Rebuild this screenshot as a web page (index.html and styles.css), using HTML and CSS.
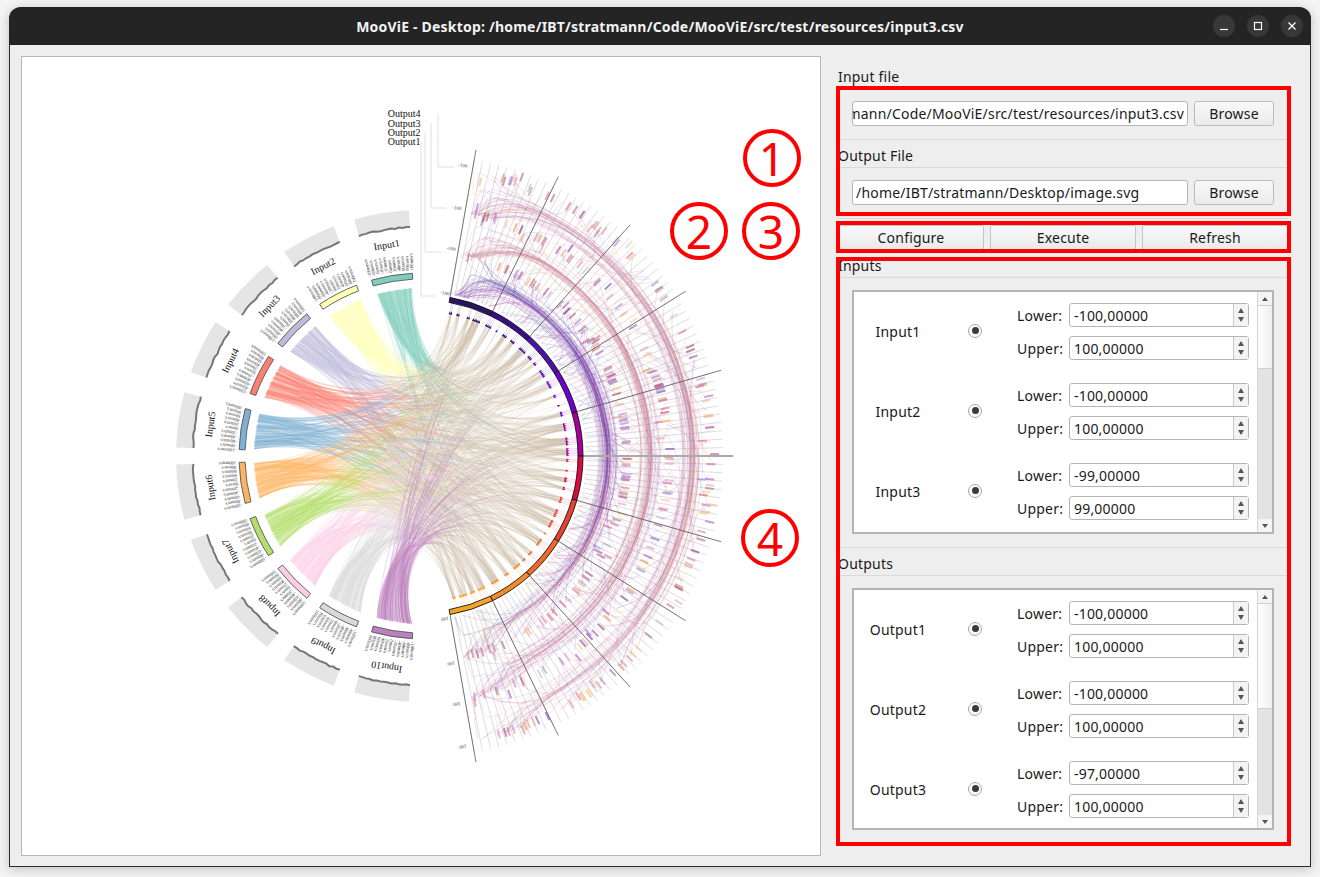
FILE: index.html
```html
<!DOCTYPE html>
<html lang="en">
<head>
    <meta charset="utf-8">
    <title>MooViE - Desktop</title>
    <link rel="stylesheet" href="styles.css">
    <script src="chart.js" defer></script>
</head>
<body>
    <div class="window">
        <div class="titlebar">
            <div></div>
            <div class="title">MooViE - Desktop: /home/IBT/stratmann/Code/MooViE/src/test/resources/input3.csv</div>
            <div class="controls">
                <span class="control"><svg width="12" height="12" viewBox="0 0 12 12"><path d="M2 9.5H10" stroke="#fff" stroke-width="1.2"/></svg></span>
                <span class="control"><svg width="12" height="12" viewBox="0 0 12 12"><rect x="2.5" y="2.5" width="7" height="7" fill="none" stroke="#fff" stroke-width="1.2"/></svg></span>
                <span class="control"><svg width="12" height="12" viewBox="0 0 12 12"><path d="M2.5 2.5L9.5 9.5M9.5 2.5L2.5 9.5" stroke="#fff" stroke-width="1.3"/></svg></span>
            </div>
        </div>
        <div class="main">
            <div class="chart">
                <svg id="plot" width="798" height="798" viewBox="22 57 798 798"></svg>
            </div>
            <div class="pane">
                <div class="group-title first">Input file</div>
                <div class="file-row">
                    <div class="file-field scrolled"><span>/home/IBT/stratmann/Code/MooViE/src/test/resources/input3.csv</span></div>
                    <div class="browse">Browse</div>
                </div>
                <div class="divider"></div>
                <div class="group-title">Output File</div>
                <div class="file-row">
                    <div class="file-field"><span>/home/IBT/stratmann/Desktop/image.svg</span></div>
                    <div class="browse">Browse</div>
                </div>
                <div class="divider"></div>
                <div class="actions">
                    <div class="action">Configure</div>
                    <div class="action">Execute</div>
                    <div class="action">Refresh</div>
                </div>
                <div class="group-title">Inputs</div>
                <div class="scroll inputs-scroll">
                    <div class="rows">
                        <div class="var">
                            <div class="var-name">Input1</div>
                            <div class="radio-cell"><span class="radio"></span></div>
                            <div class="limits">
                                <label>Lower:</label><div class="spin"><span class="spin-text">-100,00000</span><span class="spin-btn"><i class="up"></i><i class="down"></i></span></div>
                                <label>Upper:</label><div class="spin"><span class="spin-text">100,00000</span><span class="spin-btn"><i class="up"></i><i class="down"></i></span></div>
                            </div>
                        </div>
                        <div class="var">
                            <div class="var-name">Input2</div>
                            <div class="radio-cell"><span class="radio"></span></div>
                            <div class="limits">
                                <label>Lower:</label><div class="spin"><span class="spin-text">-100,00000</span><span class="spin-btn"><i class="up"></i><i class="down"></i></span></div>
                                <label>Upper:</label><div class="spin"><span class="spin-text">100,00000</span><span class="spin-btn"><i class="up"></i><i class="down"></i></span></div>
                            </div>
                        </div>
                        <div class="var">
                            <div class="var-name">Input3</div>
                            <div class="radio-cell"><span class="radio"></span></div>
                            <div class="limits">
                                <label>Lower:</label><div class="spin"><span class="spin-text">-99,00000</span><span class="spin-btn"><i class="up"></i><i class="down"></i></span></div>
                                <label>Upper:</label><div class="spin"><span class="spin-text">99,00000</span><span class="spin-btn"><i class="up"></i><i class="down"></i></span></div>
                            </div>
                        </div>
                    </div>
                    <div class="scrollbar">
                        <div class="sb-btn"><i class="up"></i></div>
                        <div class="sb-thumb thumb-inputs"></div>
                        <div class="sb-track"></div>
                        <div class="sb-btn"><i class="down"></i></div>
                    </div>
                </div>
                <div class="divider"></div>
                <div class="group-title">Outputs</div>
                <div class="scroll outputs-scroll">
                    <div class="rows">
                        <div class="var">
                            <div class="var-name">Output1</div>
                            <div class="radio-cell"><span class="radio"></span></div>
                            <div class="limits">
                                <label>Lower:</label><div class="spin"><span class="spin-text">-100,00000</span><span class="spin-btn"><i class="up"></i><i class="down"></i></span></div>
                                <label>Upper:</label><div class="spin"><span class="spin-text">100,00000</span><span class="spin-btn"><i class="up"></i><i class="down"></i></span></div>
                            </div>
                        </div>
                        <div class="var">
                            <div class="var-name">Output2</div>
                            <div class="radio-cell"><span class="radio"></span></div>
                            <div class="limits">
                                <label>Lower:</label><div class="spin"><span class="spin-text">-100,00000</span><span class="spin-btn"><i class="up"></i><i class="down"></i></span></div>
                                <label>Upper:</label><div class="spin"><span class="spin-text">100,00000</span><span class="spin-btn"><i class="up"></i><i class="down"></i></span></div>
                            </div>
                        </div>
                        <div class="var">
                            <div class="var-name">Output3</div>
                            <div class="radio-cell"><span class="radio"></span></div>
                            <div class="limits">
                                <label>Lower:</label><div class="spin"><span class="spin-text">-97,00000</span><span class="spin-btn"><i class="up"></i><i class="down"></i></span></div>
                                <label>Upper:</label><div class="spin"><span class="spin-text">100,00000</span><span class="spin-btn"><i class="up"></i><i class="down"></i></span></div>
                            </div>
                        </div>
                    </div>
                    <div class="scrollbar">
                        <div class="sb-btn"><i class="up"></i></div>
                        <div class="sb-thumb thumb-outputs"></div>
                        <div class="sb-track"></div>
                        <div class="sb-btn"><i class="down"></i></div>
                    </div>
                </div>
            </div>
        </div>
    </div>

    <!-- red annotations drawn over the screenshot -->
    <div class="mark mark-files"></div>
    <div class="mark mark-actions"></div>
    <div class="mark mark-ranges"></div>
    <div class="badge badge-1">1</div>
    <div class="badge badge-2">2</div>
    <div class="badge badge-3">3</div>
    <div class="badge badge-4">4</div>
</body>
</html>
```

FILE: styles.css
```css
body {
    margin: 0;
    padding: 7px 9px 0 9px;
    height: 870px;
    overflow: hidden;
    position: relative;
    background-color: #f4f4f4;
    font-family: "Noto Sans", sans-serif;
    font-size: 14px;
    color: #1a1a1a;
}

/* Window frame */
.window {
    width: 1302px;
    height: 860px;
    box-sizing: border-box;
    border: 1px solid #2b2b2b;
    border-top: none;
    border-radius: 12px 12px 0 0;
    background-color: #eeeeee;
    box-shadow: 0 2px 12px rgba(0, 0, 0, 0.22);
}

.titlebar {
    height: 38px;
    margin: 0 -1px;
    display: grid;
    grid-template-columns: 1fr auto 1fr;
    align-items: center;
    background-color: #242424;
    border-radius: 12px 12px 0 0;
}

.title {
    color: #f2f2f2;
    font-weight: 700;
    font-size: 14px;
    letter-spacing: 0.2px;
}

.controls {
    display: flex;
    justify-content: flex-end;
    gap: 12px;
    padding-right: 8px;
    margin-top: -1px;
}

.control {
    width: 22px;
    height: 22px;
    border-radius: 50%;
    background-color: #383838;
    display: flex;
    align-items: center;
    justify-content: center;
}

.main {
    display: flex;
    padding: 11px 0 0 11px;
}

/* Plot on the left */
.chart {
    width: 800px;
    height: 800px;
    box-sizing: border-box;
    border: 1px solid #b8b8b8;
    background-color: #fff;
}

.chart svg {
    display: block;
}

.chart text {
    font-family: "Liberation Serif", serif;
}

/* Controls on the right */
.pane {
    width: 450px;
    margin-left: 17px;
    padding-top: 11px;
    letter-spacing: 0.2px;
}

.group-title {
    padding: 5px 0 1px;
    line-height: 21px;
    border-bottom: 1px solid #d9d9d9;
}

.group-title.first {
    padding-top: 0;
    margin-top: -1px;
}

.file-row {
    display: flex;
    gap: 6px;
    margin: 12px 0 13px 14px;
}

.file-field {
    width: 336px;
    height: 25px;
    box-sizing: border-box;
    padding: 0 3px;
    display: flex;
    align-items: center;
    overflow: hidden;
    white-space: nowrap;
    border: 1px solid #b5b5b5;
    border-radius: 3px;
    background-color: #fff;
}

.file-field.scrolled {
    justify-content: flex-end;
    padding-left: 0;
}

.browse {
    width: 80px;
    height: 25px;
    box-sizing: border-box;
    line-height: 23px;
    text-align: center;
    border: 1px solid #bcbcbc;
    border-radius: 3px;
    background: linear-gradient(#f8f8f8, #ebebeb);
}

.divider {
    height: 1px;
    background-color: #d9d9d9;
}

.actions {
    display: grid;
    grid-template-columns: repeat(3, 1fr);
    gap: 6px;
    margin-top: 6px;
}

.action {
    height: 25px;
    box-sizing: border-box;
    line-height: 23px;
    text-align: center;
    border: 1px solid #c4c4c4;
    border-radius: 2px;
    background: linear-gradient(#fafafa, #e9e9e9);
}

.scroll {
    display: flex;
    width: 422px;
    box-sizing: border-box;
    margin: 12px 0 13px 14px;
    border: 2px solid #b4b4b4;
    background-color: #fff;
}

.inputs-scroll {
    height: 244px;
}

.outputs-scroll {
    height: 242px;
    margin-bottom: 0;
}

.rows {
    flex: 1;
    overflow: hidden;
    padding-top: 11px;
}

.var {
    display: grid;
    grid-template-columns: 88px 66px 1fr;
    align-items: center;
    height: 57px;
    margin-bottom: 23px;
}

.var-name {
    text-align: center;
}

.radio-cell {
    display: flex;
    justify-content: center;
    margin-bottom: 2px;
}

.radio {
    width: 14px;
    height: 14px;
    box-sizing: border-box;
    border: 1px solid #a8a8a8;
    border-radius: 50%;
    background-color: #fafafa;
    display: flex;
    align-items: center;
    justify-content: center;
}

.radio::after {
    content: "";
    width: 7px;
    height: 7px;
    border-radius: 50%;
    background-color: #3b3b3b;
}

.limits {
    display: grid;
    grid-template-columns: 52px 180px;
    row-gap: 9px;
    align-items: center;
    padding-left: 9px;
}

.spin {
    height: 24px;
    box-sizing: border-box;
    display: flex;
    border: 1px solid #b5b5b5;
    border-radius: 3px;
    background-color: #fff;
}

.spin-text {
    flex: 1;
    padding-left: 4px;
    line-height: 23px;
}

.spin-btn {
    width: 14px;
    border-left: 1px solid #c8c8c8;
    background-color: #f3f3f3;
    display: flex;
    flex-direction: column;
    align-items: center;
    justify-content: center;
    gap: 4px;
}

.up,
.down {
    display: block;
    width: 0;
    height: 0;
    border-left: 3.5px solid transparent;
    border-right: 3.5px solid transparent;
}

.up {
    border-bottom: 5px solid #555;
}

.down {
    border-top: 5px solid #555;
}

.scrollbar {
    width: 14px;
    display: flex;
    flex-direction: column;
    border-left: 1px solid #d6d6d6;
    background-color: #e3e3e3;
}

.sb-btn {
    height: 13px;
    background-color: #f4f4f4;
    display: flex;
    align-items: center;
    justify-content: center;
}

.sb-btn .up {
    border-bottom-width: 4px;
}

.sb-btn .down {
    border-top-width: 4px;
}

.sb-thumb {
    border-top: 1px solid #d0d0d0;
    border-bottom: 1px solid #d0d0d0;
    background: linear-gradient(90deg, #ffffff, #efefef);
}

.thumb-inputs {
    height: 62px;
}

.thumb-outputs {
    height: 104px;
}

.sb-track {
    flex: 1;
}

/* Red annotations */
.mark {
    position: absolute;
    left: 836px;
    width: 455px;
    box-sizing: border-box;
    border: 4px solid #ff0000;
}

.mark-files {
    top: 86px;
    height: 130px;
}

.mark-actions {
    top: 221px;
    height: 32px;
}

.mark-ranges {
    top: 257px;
    height: 589px;
}

.badge {
    position: absolute;
    width: 58px;
    height: 58px;
    box-sizing: border-box;
    border: 4px solid #ff0000;
    border-radius: 50%;
    color: #ff0000;
    font-size: 46px;
    line-height: 50px;
    text-align: center;
}

.badge-1 {
    left: 743px;
    top: 129px;
}

.badge-2 {
    left: 670px;
    top: 202px;
}

.badge-3 {
    left: 742px;
    top: 202px;
}

.badge-4 {
    left: 741px;
    top: 509px;
}
```

FILE: chart.js
```js
const NS = "http://www.w3.org/2000/svg";
const plot = document.getElementById("plot");
const CX = 422, CY = 456;

let seed = 4711;
function rnd() {
    seed = (seed * 16807) % 2147483647;
    return seed / 2147483647;
}
function between(a, b) {
    return a + (b - a) * rnd();
}

// angle in degrees, clockwise from twelve o'clock
function pt(r, deg) {
    const a = deg * Math.PI / 180;
    return [CX + r * Math.sin(a), CY - r * Math.cos(a)];
}
function f(p) {
    return p[0].toFixed(1) + " " + p[1].toFixed(1);
}
function add(tag, attrs, text) {
    const el = document.createElementNS(NS, tag);
    for (const k in attrs) {
        if (k !== "parent") el.setAttribute(k, attrs[k]);
    }
    if (text !== undefined) el.textContent = text;
    (attrs.parent || plot).appendChild(el);
    return el;
}
function sector(r0, r1, a0, a1) {
    const sweep = a1 > a0 ? 1 : 0;
    const rev = a1 > a0 ? 0 : 1;
    return "M" + f(pt(r0, a0)) + "A" + r0 + " " + r0 + " 0 0 " + sweep + " " + f(pt(r0, a1)) +
        "L" + f(pt(r1, a1)) + "A" + r1 + " " + r1 + " 0 0 " + rev + " " + f(pt(r1, a0)) + "Z";
}

const inputColors = ["#80cdbb", "#ffffb3", "#bebada", "#fb8072", "#80b1d3",
    "#fdb462", "#b3de69", "#fccde5", "#d9d9d9", "#bc80bd"];
const ringColors = ["#2b1464", "#371088", "#4a10a8", "#6c02cc", "#a4009a",
    "#d80a40", "#e8432e", "#f0682c", "#f58a28", "#f5a425"];
const dashColors = ["#8a5cd0", "#b05fa8", "#d0607a", "#eaa070", "#f0c080",
    "#9a90d0", "#c070c0", "#a06080", "#e88080"];
const defs = add("defs", {});

function ringColor(deg) {
    return ringColors[Math.min(9, Math.max(0, Math.floor((deg - 10) / 16)))];
}

// spokes of the output half
for (let d = 10; d <= 170.01; d += 1.6) {
    add("path", { d: "M" + f(pt(164, d)) + "L" + f(pt(301, d)), stroke: "#dedede", "stroke-width": 1, fill: "none" });
}

// arcs running between the output tracks
const bands = [[186, 164, 205], [228, 205, 247], [270, 247, 289]];
bands.forEach(function (b, k) {
    for (let i = 0; i < 110; i++) {
        let t0 = between(10, 170), t1 = between(10, 170);
        if (rnd() < 0.2) t0 = between(11, 16);
        if (rnd() < 0.2) t1 = between(160, 169);
        const spread = rnd() < 0.55 ? between(-3, 3) : between(-11, 11), pts = [];
        for (let s = 0; s <= 26; s++) {
            const t = s / 26;
            const ease0 = Math.max(0, 1 - t / 0.14), ease1 = Math.max(0, (t - 0.86) / 0.14);
            const r = b[0] + spread + (b[1] - b[0] - spread) * ease0 * ease0 + (b[2] - b[0] - spread) * ease1 * ease1;
            pts.push(f(pt(r, t0 + (t1 - t0) * t)));
        }
        let col = dashColors[Math.floor(rnd() * dashColors.length)];
        if (k === 0) col = rnd() < 0.6 ? "#6a5aa8" : ringColor((t0 + t1) / 2);
        add("path", { d: "M" + pts.join("L"), stroke: col, "stroke-opacity": 0.19, "stroke-width": 1, fill: "none" });
    }
});

// dashes of the three outer tracks
[205, 247, 289].forEach(function (r) {
    for (let i = 0; i < 105; i++) {
        const d = between(12, 168), rr = r + (rnd() < 0.75 ? between(-1, 1) : between(-9, 9));
        add("path", {
            d: "M" + f(pt(rr - 4.5, d)) + "L" + f(pt(rr + 4.5, d)),
            stroke: dashColors[Math.floor(rnd() * dashColors.length)],
            "stroke-opacity": between(0.35, 0.75), "stroke-width": 2, fill: "none"
        });
    }
});

// major axes
for (let d = 10; d <= 170; d += 16) {
    add("path", {
        d: "M" + f(pt(161, d)) + "L" + f(pt(311, d)),
        stroke: d === 90 ? "#aaaaaa" : "#555555", "stroke-width": d === 90 ? 2 : 0.9,
        "stroke-opacity": d === 90 ? 1 : 0.85, fill: "none"
    });
}

// outer grey histograms, tick labels, bars and labels of the inputs
inputColors.forEach(function (col, i) {
    const a0 = -3 - 18 * i + (i >= 5 ? 1 : 0), a1 = a0 - 13, mid = (a0 + a1) / 2;
    add("path", { d: sector(229, 246, a0, a1), fill: "#e5e5e5" });
    const edge = [];
    for (let s = 0; s <= 14; s++) {
        edge.push(f(pt(229 + between(-0.5, 0.8), a0 + (a1 - a0) * s / 14)));
    }
    add("path", { d: "M" + edge.join("L"), stroke: "#767676", "stroke-width": 2, fill: "none" });
    add("path", { d: sector(177, 183, a0, a1), fill: col, stroke: "#555", "stroke-width": 0.9 });
    for (let s = 0; s <= 10; s++) {
        const d = a0 + (a1 - a0) * s / 10, p = pt(186, d);
        add("text", {
            x: p[0], y: p[1], "font-size": 4.6, fill: "#333",
            transform: "rotate(" + (d - 90) + " " + p[0] + " " + p[1] + ")",
            "dominant-baseline": "middle"
        }, (100 - 20 * s) + "mm/s");
    }
    const lp = pt(213, mid);
    add("text", {
        x: lp[0], y: lp[1], "font-size": 10, fill: "#111", "text-anchor": "middle",
        "dominant-baseline": "middle",
        transform: "rotate(" + mid + " " + lp[0] + " " + lp[1] + ")"
    }, "Input" + (i + 1));
});

// clustered targets on the inside of the ring
const targets = [];
let tAngle = 11;
while (tAngle < 169) {
    const n = 1 + Math.floor(rnd() * 5);
    for (let i = 0; i < n && tAngle < 169; i++) {
        targets.push(tAngle);
        tAngle += 0.62;
    }
    tAngle += between(1, 3.2);
}

// strands from every input to the targets, fading into pale beige at the ring
let gid = 0;
inputColors.forEach(function (col, i) {
    const a0 = -3.4 - 18 * i + (i >= 5 ? 1 : 0), a1 = a0 - 12.2, mid = (a0 + a1) / 2;
    const bundleOf = function (a) {
        return mid * 0.9 + (a - mid) * 0.4;
    };

    // pale body of the ribbon under its strands, fading toward the middle
    const fade = add("radialGradient", {
        parent: defs, id: "fade" + i, gradientUnits: "userSpaceOnUse", cx: CX, cy: CY, r: 170
    });
    add("stop", { parent: fade, offset: "0.38", "stop-color": col, "stop-opacity": 0 });
    add("stop", { parent: fade, offset: "0.75", "stop-color": col, "stop-opacity": 0.42 });
    const end = pt(40, 90);
    add("path", {
        d: "M" + f(pt(168, a0)) + "C" + f(pt(84, bundleOf(a0))) + " " + f(pt(66, 90)) + " " + f(end) +
            "C" + f(pt(66, 90)) + " " + f(pt(84, bundleOf(a1))) + " " + f(pt(168, a1)) + "Z",
        fill: "url(#fade" + i + ")"
    });

    for (let s = 0; s < 90; s++) {
        const a = between(a1, a0);
        const target = targets[Math.floor(rnd() * targets.length)];
        const p0 = pt(168, a), p3 = pt(146, target);
        const p1 = pt(84, bundleOf(a));
        const p2 = pt(66, target + between(-11, 11));
        const id = "g" + gid++;
        const g = add("linearGradient", {
            parent: defs, id: id, gradientUnits: "userSpaceOnUse",
            x1: p0[0], y1: p0[1], x2: p3[0], y2: p3[1]
        });
        add("stop", { parent: g, offset: "0", "stop-color": col });
        add("stop", { parent: g, offset: "0.5", "stop-color": col, "stop-opacity": 0.75 });
        add("stop", { parent: g, offset: "0.8", "stop-color": "#c6b49c", "stop-opacity": 0.5 });
        add("stop", { parent: g, offset: "1", "stop-color": "#c6b49c", "stop-opacity": 0.7 });
        add("path", {
            d: "M" + f(p0) + "C" + f(p1) + " " + f(p2) + " " + f(p3),
            stroke: "url(#" + id + ")", "stroke-opacity": 0.32, "stroke-width": 1, fill: "none"
        });
    }
});

// target markers
targets.forEach(function (d) {
    const c = ringColor(d);
    add("path", { d: "M" + f(pt(147, d)) + "L" + f(pt(155.5, d)), stroke: c, "stroke-opacity": 0.25, "stroke-width": 0.6, fill: "none" });
    add("path", { d: "M" + f(pt(147.5, d)) + "L" + f(pt(144.5, d - 0.45)) + "L" + f(pt(144.5, d + 0.45)) + "Z", fill: c });
});

// the output ring
ringColors.forEach(function (c, i) {
    add("path", { d: sector(156, 161, 10 + 16 * i, 26 + 16 * i), fill: c, stroke: "#111", "stroke-width": 0.9 });
});

// axis labels and the legend leaders
[[164, 441, 296, 142, 421], [209, 447, 252, 133, 425], [250, 453, 208, 123.5, 431], [293, 460, 167, 114, 438]].forEach(function (a, i) {
    const top = pt(a[0], 8), bottom = pt(a[0], 172);
    add("text", {
        x: top[0], y: top[1], "font-size": 5, fill: "#444", "text-anchor": "middle", "dominant-baseline": "middle",
        transform: "rotate(8 " + top[0] + " " + top[1] + ")"
    }, "-100");
    add("text", {
        x: bottom[0], y: bottom[1], "font-size": 5, fill: "#444", "text-anchor": "middle", "dominant-baseline": "middle",
        transform: "rotate(172 " + bottom[0] + " " + bottom[1] + ")"
    }, "100");
    add("path", {
        d: "M" + a[4] + " " + a[3] + "V" + a[2] + "L" + (a[1] - 6) + " " + a[2],
        stroke: "#dddddd", "stroke-width": 0.9, fill: "none"
    });
    add("text", { x: 420.5, y: a[3] + 0.8, "font-size": 10, fill: "#111", "text-anchor": "end", "dominant-baseline": "middle" }, "Output" + (i + 1));
});
```
